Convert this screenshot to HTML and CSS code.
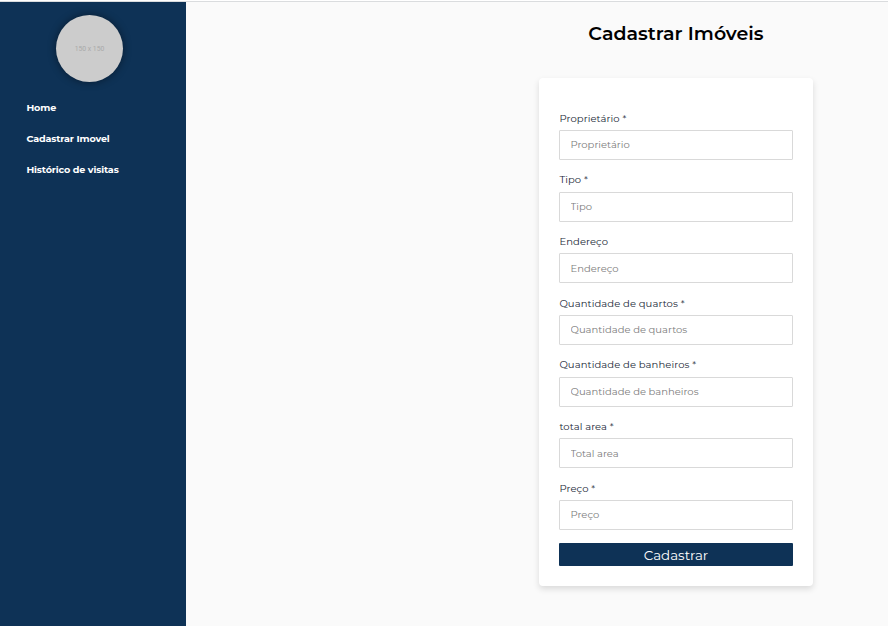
FILE: index.html
```html
<!DOCTYPE html>
<html lang="pt-BR">
<head>
<meta charset="utf-8">
<title>Cadastrar Imóveis</title>
<link rel="stylesheet" href="styles.css">
</head>
<body>
<div class="layout">
  <aside class="sidebar">
    <div class="avatar">150 x 150</div>
    <nav class="menu">
      <a>Home</a>
      <a>Cadastrar Imovel</a>
      <a>Histórico de visitas</a>
    </nav>
  </aside>
  <main class="content">
    <h1>Cadastrar Imóveis</h1>
    <form class="card">
      <div class="field"><label for="owner">Proprietário *</label><input id="owner" placeholder="Proprietário"></div>
      <div class="field"><label for="type">Tipo *</label><input id="type" placeholder="Tipo"></div>
      <div class="field"><label for="address">Endereço</label><input id="address" placeholder="Endereço"></div>
      <div class="field"><label for="rooms">Quantidade de quartos *</label><input id="rooms" placeholder="Quantidade de quartos"></div>
      <div class="field"><label for="baths">Quantidade de banheiros *</label><input id="baths" placeholder="Quantidade de banheiros"></div>
      <div class="field"><label for="area">total area *</label><input id="area" placeholder="Total area"></div>
      <div class="field"><label for="price">Preço *</label><input id="price" placeholder="Preço"></div>
      <button type="button">Cadastrar</button>
    </form>
  </main>
</div>
</body>
</html>
```

FILE: styles.css
```css
* { box-sizing: border-box; }
body {
  margin: 0;
  height: 626px;
  padding-top: 1px;
  overflow: hidden;
  background: #fff;
  font-family: Montserrat, Inter, sans-serif;
}
.layout {
  display: grid;
  grid-template-columns: 186px 1fr;
  height: 625px;
  border-top: 1px solid #dadcde;
  background: #fafafa;
}
.sidebar {
  display: flex;
  flex-direction: column;
  padding: 13px 26px 0;
  background: #0e3256;
}
.avatar {
  display: flex;
  align-items: center;
  justify-content: center;
  width: 67px;
  height: 67px;
  padding-top: 1px;
  margin-left: 30px;
  border-radius: 50%;
  background: #ccc;
  box-shadow: 0 0 8px rgba(0, 0, 0, .45);
  color: #aaa;
  font: 6.8px Roboto, sans-serif;
}
.menu {
  display: flex;
  flex-direction: column;
  align-items: flex-start;
  gap: 15px;
  margin-top: 18px;
  padding-left: .4px;
}
.menu a {
  height: 16px;
  line-height: 16px;
  color: #fff;
  font-size: 9.6px;
  font-weight: 700;
  letter-spacing: -.12px;
  white-space: nowrap;
}
.content {
  display: flex;
  flex-direction: column;
  align-items: center;
  padding-left: 278px;
}
h1 {
  margin: 19px 0 32px;
  color: #000;
  font-size: 19px;
  font-weight: 600;
  line-height: 25px;
}
.card {
  display: flex;
  flex-direction: column;
  width: 274px;
  height: 508px;
  padding: 31.7px 20px 20px;
  border-radius: 4px;
  background: #fff;
  box-shadow: 0 3px 6px rgba(0, 0, 0, .13);
}
.field { height: 61.67px; }
label {
  display: block;
  height: 20.3px;
  padding-left: .4px;
  color: #212838;
  font-size: 10px;
  line-height: 18px;
  letter-spacing: .09px;
}
input {
  display: block;
  width: 100%;
  height: 30px;
  padding: .6px 10.5px 1px;
  border: 1px solid #d9d9d9;
  border-radius: 1px;
  outline: none;
  background: #fff;
  font: 10px Montserrat, Inter, sans-serif;
}
input::placeholder { color: #7d7d7d; opacity: 1; }
button {
  height: 23px;
  margin-top: 1.6px;
  padding: 1px 0 0;
  border: 0;
  border-radius: 1px;
  background: #0e3256;
  color: #fff;
  font: 13.4px Montserrat, Inter, sans-serif;
}
```
